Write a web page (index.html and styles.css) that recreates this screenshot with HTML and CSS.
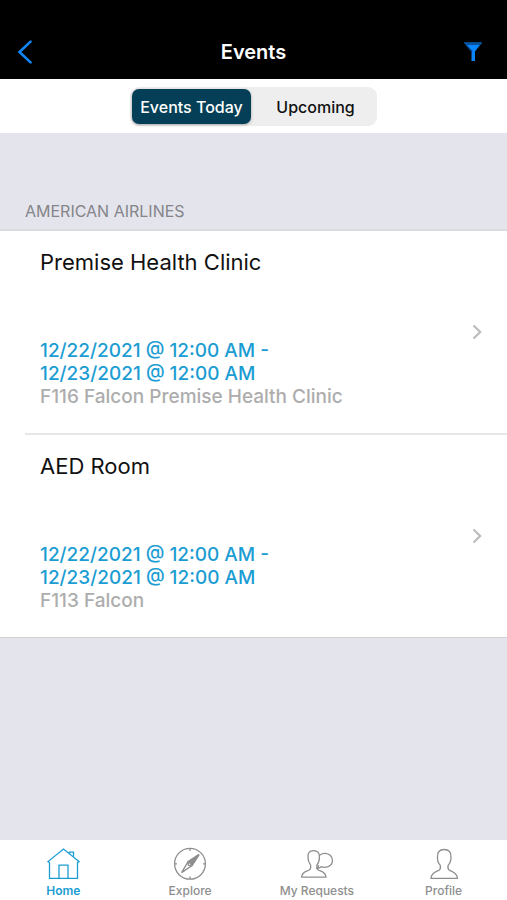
FILE: index.html
```html
<!DOCTYPE html>
<html lang="en">
<head>
  <meta charset="UTF-8">
  <meta name="viewport" content="width=device-width, initial-scale=1">
  <link rel="stylesheet" href="styles.css">
  <title>Events</title>
</head>
<body>
  <header class="navbar">
    <button class="nav-btn back" aria-label="Back">
      <svg width="16" height="24" viewBox="0 0 16 24" fill="none" stroke="#1285f5" stroke-width="2.6" stroke-linecap="round"><path d="M13.5 1.6 L2.5 12 L13.5 22.4"/></svg>
    </button>
    <h1>Events</h1>
    <button class="nav-btn filter" aria-label="Filter">
      <svg width="18" height="20" viewBox="0 0 18 20"><path d="M0 0.5H18L11 9.5V19H7.5V9.5Z" fill="#0a84ff"/><path d="M0 0.5H18L16.5 3H1.8Z" fill="#07509c"/><path d="M2.6 3.6L8 9.8" stroke="#063c78" stroke-width="1.4"/></svg>
    </button>
  </header>

  <div class="toolbar">
    <div class="segment">
      <button class="segment-btn active">Events Today</button>
      <button class="segment-btn">Upcoming</button>
    </div>
  </div>

  <main>
    <h2 class="section-title">AMERICAN AIRLINES</h2>
    <ul class="events">
      <li>
        <a class="event" href="#">
          <div class="event-info">
            <h3>Premise Health Clinic</h3>
            <p class="date">12/22/2021 @ 12:00 AM -<br>12/23/2021 @ 12:00 AM</p>
            <p class="place">F116 Falcon Premise Health Clinic</p>
          </div>
          <svg class="chevron" width="10" height="16" viewBox="0 0 10 16"><path d="M1.5 1.5L8.2 8L1.5 14.5"/></svg>
        </a>
      </li>
      <li>
        <a class="event" href="#">
          <div class="event-info">
            <h3>AED Room</h3>
            <p class="date">12/22/2021 @ 12:00 AM -<br>12/23/2021 @ 12:00 AM</p>
            <p class="place">F113 Falcon</p>
          </div>
          <svg class="chevron" width="10" height="16" viewBox="0 0 10 16"><path d="M1.5 1.5L8.2 8L1.5 14.5"/></svg>
        </a>
      </li>
    </ul>
  </main>

  <nav class="tabs">
    <a class="tab active" href="#">
      <svg width="34" height="34" viewBox="0 0 34 34"><path d="M3.5 15.6V31.3H31.5V15.6L33 14.6L17.5 2L2 14.6L3.5 15.6"/><path d="M13 31V18.2H22V31"/><path d="M23.5 6.6V5.2H27.5V9.8"/></svg>
      <span>Home</span>
    </a>
    <a class="tab" href="#">
      <svg width="34" height="34" viewBox="0 0 34 34"><circle cx="17" cy="16.8" r="15.4"/><path d="M17 1.5V4M17 29.6V32M1.6 16.8H4M30 16.8H32.4"/><path d="M26 7.6L19 18.6L8.6 25.6L15 14.8Z"/><path d="M26 7.6L19 18.6L15 14.8Z" fill="#8e8e8e"/><circle cx="16.6" cy="17.2" r="1.4" fill="#fff"/></svg>
      <span>Explore</span>
    </a>
    <a class="tab" href="#">
      <svg width="34" height="34" viewBox="0 0 34 34"><path d="M13.6 3.6C9.4 3.6 7.6 6.4 8 10C7.8 13 8.8 15.6 10.5 17.8C11 20.4 10.6 22.2 9.2 23C6.4 24.6 1.9 24.8 1.6 30.2H26C25.6 24.8 21.2 24.6 18.4 23C16.8 22 16.5 20 17 17.8C18.8 15.6 19.6 13 19.4 10C19.7 6.4 17.8 3.6 13.6 3.6Z"/><path d="M19.2 8.6C20.6 7 22.8 6.2 25 6.3C29.4 6.5 32.6 9.4 32.5 13.4C32.4 17.6 29 20.4 24.6 20.4C23.2 20.4 22.2 20.1 21.4 19.7C20.2 20.8 18.8 21.3 17.2 21.3C18.1 20.4 18.6 19.4 18.6 18"/></svg>
      <span>My Requests</span>
    </a>
    <a class="tab" href="#">
      <svg width="34" height="34" viewBox="0 0 34 34"><path d="M17.2 2.5C12.4 2.5 10.1 5.6 10.5 9.6C10.2 12.6 11.3 16.2 13.3 18.4C13.7 20.6 13.4 22.4 12 23.2C9 24.8 4.4 25.2 4 31.3H30.4C30 25.2 25.4 24.8 22.4 23.2C21 22.4 20.7 20.6 21.1 18.4C23.1 16.2 24.2 12.6 23.9 9.6C24.3 5.6 22 2.5 17.2 2.5Z"/></svg>
      <span>Profile</span>
    </a>
  </nav>
</body>
</html>
```
FILE: styles.css
```css
* {
  margin: 0;
  padding: 0;
  box-sizing: border-box;
}
body {
  min-height: 100vh;
  display: flex;
  flex-direction: column;
  background: #e4e4ed;
  color: #111;
  font-family: Inter, "Liberation Sans", sans-serif;
}
button {
  border: none;
  background: none;
  font-family: inherit;
  cursor: pointer;
}
a {
  color: inherit;
  text-decoration: none;
}
svg {
  display: block;
}

/* top bar */
.navbar {
  display: grid;
  grid-template-columns: 1fr auto 1fr;
  align-items: center;
  padding: 25px 17px 0;
  height: 79px;
  background: #000;
  color: #fff;
}
.navbar h1 {
  font-size: 20px;
  line-height: 24px;
  font-weight: 600;
}
.nav-btn.filter {
  justify-self: end;
  padding-right: 8px;
}
.nav-btn.back {
  justify-self: start;
}

/* segmented control */
.toolbar {
  display: flex;
  justify-content: center;
  padding: 8px 8px 7px;
  background: #fff;
}
.segment {
  display: flex;
  gap: 5px;
  padding: 2px;
  border-radius: 9px;
  background: #eee;
}
.segment-btn {
  width: 119px;
  height: 35px;
  border-radius: 7px;
  font-size: 16px;
  font-weight: 500;
  color: #111;
}
.segment-btn.active {
  background: #053f57;
  color: #fff;
  box-shadow: 0 1px 3px rgba(0, 0, 0, 0.3);
}

main {
  flex: 1;
}
.section-title {
  padding: 68px 25px 8px;
  font-size: 16px;
  line-height: 20px;
  font-weight: 400;
  color: #85858a;
}
.events {
  list-style: none;
  background: #fff;
  border-top: 2px solid #dcdce0;
  border-bottom: 1px solid #d0d0d4;
}
.events li {
  padding-left: 25px;
}
.event {
  display: flex;
  align-items: center;
  justify-content: space-between;
  padding: 0 25px 0 15px;
}
.event-info {
  padding: 18px 0 25px;
}
.events li + li .event {
  border-top: 2px solid #e6e6e8;
}
.event h3 {
  margin-bottom: 64px;
  font-size: 22px;
  line-height: 26px;
  font-weight: 400;
}
.event p {
  font-size: 19px;
  line-height: 23px;
  font-weight: 500;
}
.date {
  color: #1b9dd3;
}
.place {
  color: #adadad;
}
.chevron {
  flex: none;
  fill: none;
  stroke: #bcbcbf;
  stroke-width: 2.2;
}

/* bottom tabs */
.tabs {
  display: grid;
  grid-template-columns: repeat(4, 1fr);
  padding: 7px 0 0;
  height: 60px;
  background: #fff;
}
.tab {
  display: flex;
  flex-direction: column;
  align-items: center;
  gap: 2px;
  font-size: 12px;
  line-height: 16px;
  font-weight: 500;
  color: #8e8e8e;
}
.tab svg {
  fill: none;
  stroke: currentColor;
  stroke-width: 1.3;
}
.tab.active {
  color: #1b9dd3;
  font-weight: 600;
}
```
